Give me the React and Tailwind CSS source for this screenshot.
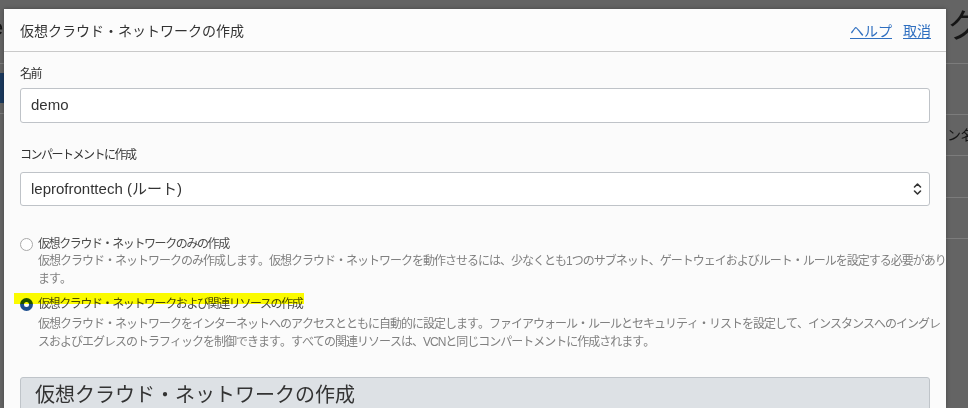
import React from 'react';

const jp = "font-['Liberation_Sans','Noto_Sans_CJK_JP',sans-serif]";

const SortArrows = () => (
  <svg width="9" height="14" viewBox="0 0 9 14" fill="none" stroke="#333" strokeWidth="1.6" strokeLinecap="round" strokeLinejoin="round">
    <path d="M1.5 5 L4.5 2 L7.5 5" />
    <path d="M1.5 9 L4.5 12 L7.5 9" />
  </svg>
);

const Radio = ({ checked }) =>
  checked ? (
    <span className="flex h-[13px] w-[13px] shrink-0 items-center justify-center rounded-full bg-[#1d4f8f]">
      <span className="h-[5px] w-[5px] rounded-full bg-white" />
    </span>
  ) : (
    <span className="h-[13px] w-[13px] shrink-0 rounded-full border border-[#a9a9a9] bg-white" />
  );

const Option = ({ checked, label, desc, highlight, descClass }) => (
  <div className="flex flex-col">
    <div className="relative flex items-center gap-[5px]">
      <Radio checked={checked} />
      <span className="text-[12px] leading-[16px] tracking-[-1.4px] text-[#4a4a4a]">{label}</span>
      {highlight && (
        <span className="pointer-events-none absolute left-[-6px] top-[-3px] h-[11px] w-[290px] bg-[#ffff00] mix-blend-multiply" />
      )}
    </div>
    <p className={`pl-[18px] text-[12px] leading-[18px] tracking-[-1px] text-[#808080] [font-kerning:none] ${descClass}`}>{desc}</p>
  </div>
);

export default function App() {
  return (
    <div className={`relative h-[408px] w-[968px] overflow-hidden bg-[#646464] ${jp}`}>
      {/* page behind the dialog */}
      <div className="flex h-full justify-between">
        <div className="flex w-[4px] flex-col overflow-hidden">
          <div className="mt-[16px] -ml-[9px] h-[24px] text-[22px] leading-[24px] text-[#151515]">e</div>
          <div className="mt-[23px] border-t border-[#7c7c7c]" />
          <div className="mt-[9px] h-[30px] bg-[#1b3a5e]" />
          <div className="mt-[10px] border-t border-[#7c7c7c]" />
        </div>
        <div className="flex w-[22px] flex-col overflow-hidden">
          <div className="h-[63px] w-[60px] pl-[1px] pt-[6px] text-[34px] leading-[40px] text-[#151515]">ク</div>
          <div className="h-[51px] border-t border-[#7c7c7c]" />
          <div className="flex h-[41px] w-[60px] items-center border-t border-[#7c7c7c] pl-[1px] text-[14px] text-[#151515]">ン名</div>
          <div className="h-[42px] border-t border-[#7c7c7c]" />
          <div className="h-[41px] border-t border-[#7c7c7c]" />
          <div className="border-t border-[#7c7c7c]" />
        </div>
      </div>

      {/* dialog */}
      <div className="absolute bottom-0 left-[4px] top-[9px] flex w-[942px] flex-col overflow-hidden bg-[#fbfbfb] shadow-[0_0_4px_rgba(0,0,0,0.3)]">
        <div className="flex h-[43px] shrink-0 items-center justify-between border-b border-[#c9c9c9] bg-[#fcfcfc] pl-[16px] pr-[15px] pt-[1px]">
          <h1 className="text-[14px] leading-[20px] text-[#333]">仮想クラウド・ネットワークの作成</h1>
          <div className="flex gap-[11px] text-[14px] leading-[20px] text-[#2f6fc0]">
            <a className="underline underline-offset-2">ヘルプ</a>
            <a className="underline underline-offset-2">取消</a>
          </div>
        </div>

        <div className="flex shrink-0 flex-col px-4 pt-[14px]">
          <label className="text-[12px] leading-[16px] tracking-[-1.5px] text-[#333]">名前</label>
          <div className="mt-[6px] flex h-[35px] items-center rounded-[3px] border border-[#bfc3c8] bg-white pl-[10px] text-[15px] text-[#333]">
            demo
          </div>

          <label className="mt-[24px] text-[12px] leading-[16px] tracking-[-1.5px] text-[#333]">コンパートメントに作成</label>
          <div className="mt-[9px] flex h-[34px] items-center justify-between rounded-[3px] border border-[#bfc3c8] bg-white pl-[10px] pr-[7px] text-[15px] text-[#333]">
            <span>leprofronttech (ルート)</span>
            <SortArrows />
          </div>

          <div className="mt-[30px] flex flex-col gap-[8px]">
            <Option
              descClass="w-[927px]"
              label="仮想クラウド・ネットワークのみの作成"
              desc="仮想クラウド・ネットワークのみ作成します。仮想クラウド・ネットワークを動作させるには、少なくとも1つのサブネット、ゲートウェイおよびルート・ルールを設定する必要があります。"
            />
            <Option
              checked
              highlight
              descClass="mt-[3px] w-[927px]"
              label="仮想クラウド・ネットワークおよび関連リソースの作成"
              desc={
                <>
                  仮想クラウド・ネットワークをインターネットへのアクセスとともに自動的に設定します。ファイアウォール・ルールとセキュリティ・リストを設定して、インスタンスへのイングレ
                  <br />
                  スおよびエグレスのトラフィックを制御できます。すべての関連リソースは、VCNと同じコンパートメントに作成されます。
                </>
              }
            />
          </div>

          <div className="mt-[26px] h-[40px] rounded-t-[3px] border border-[#bfc4c9] bg-[#dde1e5] pl-[14px] pt-[3px] text-[20px] leading-[28px] text-[#333]">
            仮想クラウド・ネットワークの作成
          </div>
        </div>
      </div>
    </div>
  );
}
